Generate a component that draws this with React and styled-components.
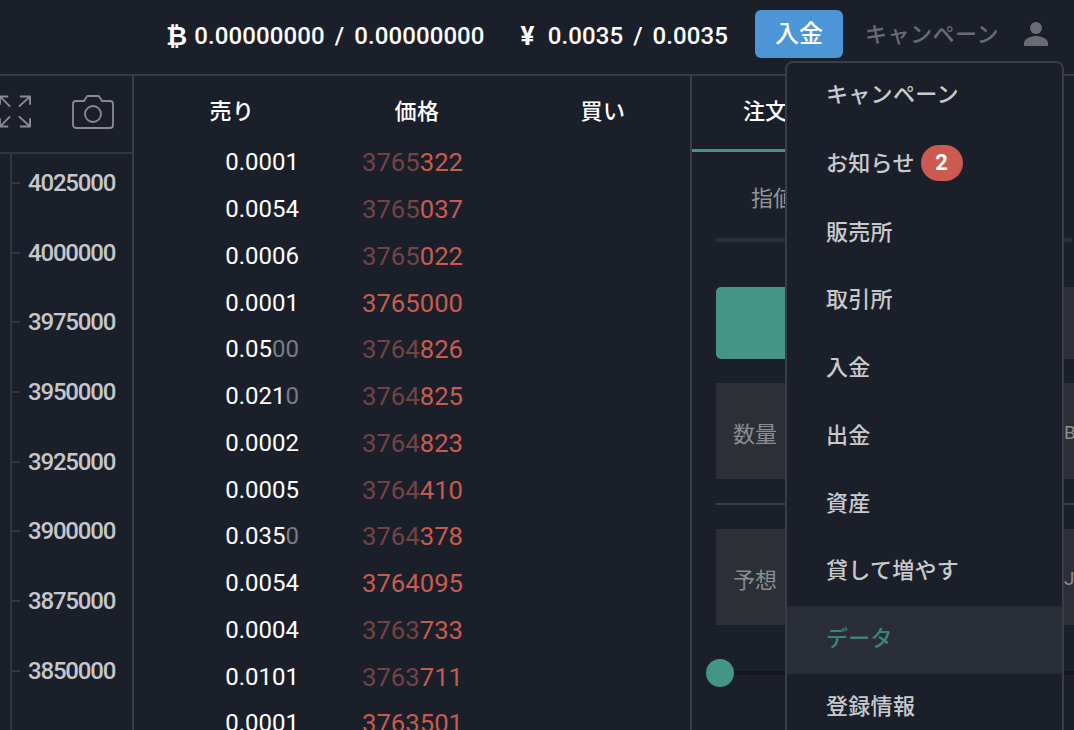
import React from 'react';
import styled, { createGlobalStyle } from 'styled-components';

const GlobalStyle = createGlobalStyle`
  html, body { margin: 0; padding: 0; background: #1b1f2a; }
  body { font-family: Roboto, "Noto Sans CJK JP", sans-serif; }
`;

const Page = styled.div`
  position: relative;
  width: 1074px;
  height: 730px;
  overflow: hidden;
  background: #1b1f2a;
  color: #fff;
`;

const Header = styled.header`
  height: 68px;
  border-bottom: 2px solid #3a3d47;
  display: flex;
  align-items: center;
  justify-content: flex-end;
  padding: 0 26px 6px 0;
`;

const Balance = styled.div`
  display: flex;
  align-items: center;
  margin-top: 4px;
  font-size: 24px;
  font-weight: 500;
  color: #fff;
  margin-right: ${({ $gap }) => $gap}px;
  letter-spacing: 0.1px;
`;

const Currency = styled.span`
  margin-right: ${({ $gap }) => $gap}px;
  font-size: 26px;
  font-weight: 700;
`;

const Slash = styled.span`
  margin: 0 10px;
`;

const DepositButton = styled.button`
  width: 88px;
  height: 48px;
  border: 0;
  border-radius: 6px;
  background: #4c96d7;
  color: #fff;
  font: 500 24px Roboto, "Noto Sans CJK JP", sans-serif;
  padding: 0 0 5px;
  margin-right: 22px;
`;

const HeaderLink = styled.span`
  font-size: 22px;
  font-weight: 500;
  letter-spacing: 0.5px;
  color: #6a6c72;
  margin: 0 25px 4px 0;
`;

const Main = styled.main`
  display: flex;
  height: 654px;
`;

const ChartPane = styled.section`
  width: 132px;
  flex: none;
  border-right: 2px solid #3a3d47;
`;

const ChartTools = styled.div`
  height: 76px;
  border-bottom: 2px solid #32353f;
  display: flex;
  align-items: center;
  justify-content: space-between;
  padding: 0 18px 0 0;
  svg { margin-bottom: 5px; }
`;

const Axis = styled.div`
  margin-left: 10px;
  border-left: 2px solid #32353f;
  height: 580px;
  padding-top: 13px;
  display: flex;
  flex-direction: column;
`;

const AxisRow = styled.div`
  height: 69.7px;
  display: flex;
  align-items: flex-start;
  font-size: 24px;
  font-weight: 500;
  letter-spacing: -1.2px;
  line-height: 32px;
  color: #c6c7cb;
`;

const Tick = styled.i`
  width: 8px;
  height: 2px;
  margin: 15px 8px 0 0;
  background: #32353f;
`;

const BookPane = styled.section`
  width: 556px;
  flex: none;
  border-right: 2px solid #3a3d47;
`;

const BookHead = styled.div`
  height: 63px;
  box-sizing: border-box;
  padding-top: 22px;
  display: grid;
  grid-template-columns: 196px 186px 174px;
  align-items: start;
  font-size: 22px;
  font-weight: 500;
  letter-spacing: 0.4px;
  line-height: 28px;
  text-align: center;
`;

const PriceTitle = styled.span`
  padding-right: 12px;
`;

const BookRow = styled.div`
  height: 46.75px;
  display: flex;
  align-items: center;
  font-size: 24px;
`;

const Amount = styled.div`
  width: 165px;
  text-align: right;
  color: #fff;
`;

const Faded = styled.span`
  color: #7a7c82;
`;

const Price = styled.div`
  margin-left: 63px;
  font-size: 25.7px;
  color: #c65b50;
`;

const PriceHead = styled.span`
  color: #724446;
`;

const OrderPane = styled.section`
  flex: 1;
  min-width: 0;
  overflow: hidden;
`;

const Tabs = styled.div`
  height: 76px;
  display: flex;
`;

const Tab = styled.div`
  width: 191px;
  box-sizing: border-box;
  border-bottom: 3px solid #439585;
  padding: 21px 0 0 51px;
  font-size: 22px;
  font-weight: 500;
  line-height: 30px;
`;

const SubTabs = styled.div`
  margin: 0 2px 0 24px;
  height: 90px;
  box-sizing: border-box;
  border-bottom: 4px solid #2a2e37;
  padding: 28px 0 0 35px;
  font-size: 22px;
  color: #94959a;
`;

const Form = styled.div`
  padding: 45px 0 0 24px;
  display: flex;
  flex-direction: column;
`;

const SideButtons = styled.div`
  height: 72px;
  display: grid;
  grid-template-columns: 180px 1fr;
`;

const SideButton = styled.div`
  border-radius: ${({ $left }) => ($left ? '5px 0 0 5px' : '0')};
  background: ${({ $left }) => ($left ? '#439585' : '#2c3036')};
`;

const Field = styled.div`
  margin-top: ${({ $top }) => $top}px;
  height: 96px;
  box-sizing: border-box;
  background: #2c3036;
  display: flex;
  align-items: center;
  padding: 2px 0 0 17px;
  font-size: 22px;
  color: #8c8d92;
  white-space: nowrap;
  overflow: hidden;
`;

const FieldLabel = styled.span`
  width: 331px;
  flex: none;
`;

const Unit = styled.span`
  font-size: 19px;
`;

const Divider = styled.div`
  height: 2px;
  margin-top: 24px;
  background: #3a3d47;
`;

const Slider = styled.div`
  position: relative;
  height: 4px;
  margin: 46px 0 0 0;
  background: #14171f;
`;

const Thumb = styled.span`
  position: absolute;
  left: -10px;
  top: -12px;
  width: 28px;
  height: 28px;
  border-radius: 50%;
  background: #439585;
`;

const Menu = styled.nav`
  position: absolute;
  left: 785px;
  top: 61px;
  width: 279px;
  height: 700px;
  box-sizing: border-box;
  border: 2px solid #3a3d47;
  border-radius: 8px;
  background: #1b1f2a;
`;

const MenuItem = styled.div`
  height: ${({ $tall }) => ($tall ? '70px' : '67.75px')};
  box-sizing: border-box;
  margin-top: ${({ $first }) => ($first ? '-1px' : '0')};
  display: flex;
  align-items: center;
  padding: 0 0 8px 39px;
  font-size: 22px;
  font-weight: 500;
  letter-spacing: 0.3px;
  color: ${({ $active }) => ($active ? '#3c8478' : '#c9cacd')};
  background: ${({ $active }) => ($active ? '#292d35' : 'transparent')};
`;

const Badge = styled.span`
  width: 42px;
  height: 36px;
  border-radius: 18px;
  margin: 4px 0 0 6px;
  display: flex;
  align-items: center;
  justify-content: center;
  background: #cc5a4f;
  color: #fff;
  font-size: 22px;
  font-weight: 700;
`;

const ExpandIcon = () => (
  <svg width="34" height="33" viewBox="0 0 34 34" fill="none" stroke="#8a8b8f" strokeWidth="2" style={{ marginLeft: -2 }}>
    <path d="M1 1.500h9M1.500 1v9M2 2l10 10M33 1.500h-11M32.500 1v9M32 2L21 12M1 32.500h9M1.500 33v-9M2 32l10-10M33 32.500h-11M32.500 33v-9M32 32L21 22" />
  </svg>
);

const CameraIcon = () => (
  <svg width="42" height="34" viewBox="0 0 42 34" fill="none" stroke="#8a8b8f" strokeWidth="1.800">
    <path d="M4 6h8l2.500-4q.5-1 2-1h9q1.500 0 2 1L30 6h8a3 3 0 0 1 3 3v21a3 3 0 0 1-3 3H4a3 3 0 0 1-3-3V9a3 3 0 0 1 3-3z" />
    <circle cx="21" cy="19" r="8" />
  </svg>
);

const UserIcon = () => (
  <svg width="24" height="24" viewBox="0 0 24 24" fill="#6a6c72">
    <circle cx="12" cy="6" r="6" />
    <path d="M0 24v-3c0-4.500 8-7 12-7s12 2.500 12 7v3z" />
  </svg>
);

const axisLabels = [4025000, 4000000, 3975000, 3950000, 3925000, 3900000, 3875000, 3850000];

const book = [
  ['0.0001', '', '3765', '322'],
  ['0.0054', '', '3765', '037'],
  ['0.0006', '', '3765', '022'],
  ['0.0001', '', '', '3765000'],
  ['0.05', '00', '3764', '826'],
  ['0.021', '0', '3764', '825'],
  ['0.0002', '', '3764', '823'],
  ['0.0005', '', '3764', '410'],
  ['0.035', '0', '3764', '378'],
  ['0.0054', '', '', '3764095'],
  ['0.0004', '', '3763', '733'],
  ['0.0101', '', '3763', '711'],
  ['0.0001', '', '', '3763501'],
];

const menuItems = ['キャンペーン', 'お知らせ', '販売所', '取引所', '入金', '出金', '資産', '貸して増やす', 'データ', '登録情報'];

export default function App() {
  return (
    <Page>
      <GlobalStyle />
      <Header>
        <Balance $gap={36}>
          <Currency $gap={7}>₿</Currency>0.00000000<Slash>/</Slash>0.00000000
        </Balance>
        <Balance $gap={27}>
          <Currency $gap={13}>¥</Currency>0.0035<Slash>/</Slash>0.0035
        </Balance>
        <DepositButton>入金</DepositButton>
        <HeaderLink>キャンペーン</HeaderLink>
        <UserIcon />
      </Header>
      <Main>
        <ChartPane>
          <ChartTools>
            <ExpandIcon />
            <CameraIcon />
          </ChartTools>
          <Axis>
            {axisLabels.map((label) => (
              <AxisRow key={label}>
                <Tick />
                {label}
              </AxisRow>
            ))}
          </Axis>
        </ChartPane>
        <BookPane>
          <BookHead>
            <span>売り</span>
            <PriceTitle>価格</PriceTitle>
            <span>買い</span>
          </BookHead>
          {book.map(([amount, fade, head, tail], i) => (
            <BookRow key={i}>
              <Amount>
                {amount}
                {fade && <Faded>{fade}</Faded>}
              </Amount>
              <Price>
                {head && <PriceHead>{head}</PriceHead>}
                {tail}
              </Price>
            </BookRow>
          ))}
        </BookPane>
        <OrderPane>
          <Tabs>
            <Tab>注文</Tab>
          </Tabs>
          <SubTabs>指値</SubTabs>
          <Form>
            <SideButtons>
              <SideButton $left />
              <SideButton />
            </SideButtons>
            <Field $top={24}>
              <FieldLabel>数量</FieldLabel>
              <Unit>BTC</Unit>
            </Field>
            <Divider />
            <Field $top={24}>
              <FieldLabel>予想</FieldLabel>
              <Unit>JPY</Unit>
            </Field>
            <Slider>
              <Thumb />
            </Slider>
          </Form>
        </OrderPane>
      </Main>
      <Menu>
        {menuItems.map((item, i) => (
          <MenuItem key={item} $first={i === 0} $tall={item === 'お知らせ'} $active={item === 'データ'}>
            {item}
            {item === 'お知らせ' && <Badge>2</Badge>}
          </MenuItem>
        ))}
      </Menu>
    </Page>
  );
}
